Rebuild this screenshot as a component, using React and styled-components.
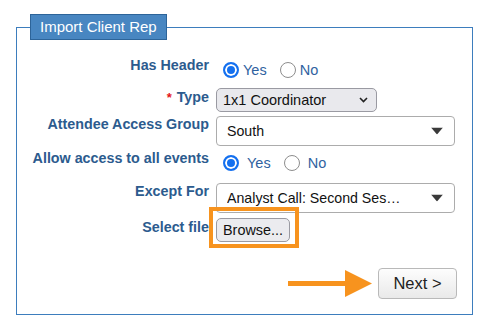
import React from "react";
import styled, { createGlobalStyle } from "styled-components";

const GlobalStyle = createGlobalStyle`
  html, body {
    margin: 0;
    padding: 0;
    background: #ffffff;
  }
  body {
    font-family: "Liberation Sans", Arial, sans-serif;
  }
`;

const Page = styled.div`
  width: 488px;
  height: 332px;
  padding: 14px 0 0 16px;
  box-sizing: border-box;
`;

const Fieldset = styled.fieldset`
  width: 457px;
  box-sizing: border-box;
  margin: 0;
  padding: 16px 15px 15px 0;
  border: 1px solid #3d7dbd;
  min-inline-size: 0;
`;

const Legend = styled.legend`
  margin-left: 13px;
  padding: 0 9px;
  height: 26px;
  box-sizing: border-box;
  line-height: 24px;
  font-size: 15px;
  color: #ffffff;
  background: #4886c1;
  border: 1px solid #2d6499;
`;

const Row = styled.div`
  display: grid;
  grid-template-columns: 192px auto;
  column-gap: 7px;
  align-items: start;
  margin-top: ${(p) => p.$mt || 0}px;
`;

const Label = styled.label`
  text-align: right;
  font-weight: bold;
  font-size: 14.3px;
  line-height: 16px;
  color: #2c5b8e;
  padding-top: ${(p) => p.$pt || 0}px;
`;

const Required = styled.span`
  color: #e4141b;
  font-size: 13px;
  margin-right: 5px;
`;

const RadioGroup = styled.div`
  display: flex;
  align-items: center;
  height: ${(p) => p.$h}px;
  padding-left: 7px;
`;

const RadioOption = styled.label`
  display: flex;
  align-items: center;
  gap: ${(p) => p.$gap}px;
  margin-right: 13px;
  font-size: 14.5px;
  color: #2f62a0;
`;

const Radio = styled.input.attrs({ type: "radio" })`
  appearance: none;
  -webkit-appearance: none;
  width: 16px;
  height: 16px;
  margin: 0;
  box-sizing: border-box;
  border-radius: 50%;
  border: 1px solid #8d8d8d;
  background: #ffffff;

  &:checked {
    border: 2px solid #1470ef;
    background: #1470ef;
    box-shadow: inset 0 0 0 2px #ffffff;
  }
`;

const SelectWrap = styled.div`
  position: relative;
  width: ${(p) => p.$w}px;
  height: ${(p) => p.$h}px;
`;

const Select = styled.select`
  appearance: none;
  -webkit-appearance: none;
  width: 100%;
  height: 100%;
  box-sizing: border-box;
  margin: 0;
  font-family: "Liberation Sans", Arial, sans-serif;
  font-size: ${(p) => (p.$mac ? 14.5 : 14.2)}px;
  color: #111111;
  padding: 0 24px 0 ${(p) => (p.$mac ? 6 : 10)}px;
  border-radius: ${(p) => (p.$mac ? 5 : 4)}px;
  border: 1px solid ${(p) => (p.$mac ? "#9a9aa2" : "#acacac")};
  background: ${(p) => (p.$mac ? "#e9e9ed" : "#ffffff")};
`;

const ArrowIcon = styled.svg`
  position: absolute;
  top: 50%;
  right: ${(p) => p.$r}px;
  transform: translateY(-50%);
  pointer-events: none;
`;

const Highlight = styled.span`
  position: relative;
  display: inline-block;
  width: 74px;

  &::before {
    content: "";
    position: absolute;
    top: -11px;
    left: -7px;
    right: -9px;
    bottom: -6px;
    border: 4px solid #f7931e;
  }
`;

const BrowseButton = styled.button`
  position: relative;
  display: block;
  width: 74px;
  height: 24px;
  box-sizing: border-box;
  padding: 0;
  font-family: "Liberation Sans", Arial, sans-serif;
  font-size: 14.4px;
  color: #111111;
  background: #ebebef;
  border: 1px solid #9a9aa2;
  border-radius: 5px;
`;

const Footer = styled.div`
  display: flex;
  justify-content: flex-end;
  align-items: center;
  gap: 6px;
  margin-top: 26px;
`;

const NextButton = styled.button`
  width: 79px;
  height: 31px;
  box-sizing: border-box;
  padding: 0;
  font-family: "Liberation Sans", Arial, sans-serif;
  font-size: 16.5px;
  color: #222222;
  background: linear-gradient(#fdfdfd, #e9e9e9);
  border: 1px solid #b9b9b9;
  border-radius: 4px;
`;

function Chevron() {
  return (
    <ArrowIcon $r={9} width="9" height="6" viewBox="0 0 9 6">
      <path d="M1 1 L4.5 4.5 L8 1" fill="none" stroke="#222" strokeWidth="1.6" />
    </ArrowIcon>
  );
}

function Caret() {
  return (
    <ArrowIcon $r={12} width="12" height="7" viewBox="0 0 12 7">
      <path d="M0 0 H12 L6 7 Z" fill="#3a3a3a" />
    </ArrowIcon>
  );
}

function PointerArrow() {
  return (
    <svg width="84" height="27" viewBox="0 0 84 27">
      <rect x="0" y="11" width="60" height="5" fill="#f7931e" />
      <path d="M57 0 L84 13.5 L57 27 Z" fill="#f7931e" />
    </svg>
  );
}

export default function App() {
  return (
    <Page>
      <GlobalStyle />
      <Fieldset>
        <Legend>Import Client Rep</Legend>

        <Row>
          <Label $pt={1}>Has Header</Label>
          <RadioGroup $h={28}>
            <RadioOption $gap={4}>
              <Radio name="header" defaultChecked />
              Yes
            </RadioOption>
            <RadioOption $gap={4}>
              <Radio name="header" />
              No
            </RadioOption>
          </RadioGroup>
        </Row>

        <Row $mt={4}>
          <Label $pt={1}>
            <Required>*</Required>Type
          </Label>
          <SelectWrap $w={161} $h={24}>
            <Select $mac defaultValue="1x1">
              <option value="1x1">1x1 Coordinator</option>
            </Select>
            <Chevron />
          </SelectWrap>
        </Row>

        <Row $mt={4}>
          <Label>Attendee Access Group</Label>
          <SelectWrap $w={239} $h={30}>
            <Select defaultValue="south">
              <option value="south">South</option>
            </Select>
            <Caret />
          </SelectWrap>
        </Row>

        <Row $mt={4}>
          <Label>Allow access to all events</Label>
          <RadioGroup $h={26}>
            <RadioOption $gap={8}>
              <Radio name="allow" defaultChecked />
              Yes
            </RadioOption>
            <RadioOption $gap={8}>
              <Radio name="allow" />
              No
            </RadioOption>
          </RadioGroup>
        </Row>

        <Row $mt={7}>
          <Label>Except For</Label>
          <SelectWrap $w={239} $h={30}>
            <Select defaultValue="analyst">
              <option value="analyst">Analyst Call: Second Ses…</option>
            </Select>
            <Caret />
          </SelectWrap>
        </Row>

        <Row $mt={5}>
          <Label $pt={1}>Select file</Label>
          <Highlight>
            <BrowseButton>Browse...</BrowseButton>
          </Highlight>
        </Row>

        <Footer>
          <PointerArrow />
          <NextButton>Next &gt;</NextButton>
        </Footer>
      </Fieldset>
    </Page>
  );
}
